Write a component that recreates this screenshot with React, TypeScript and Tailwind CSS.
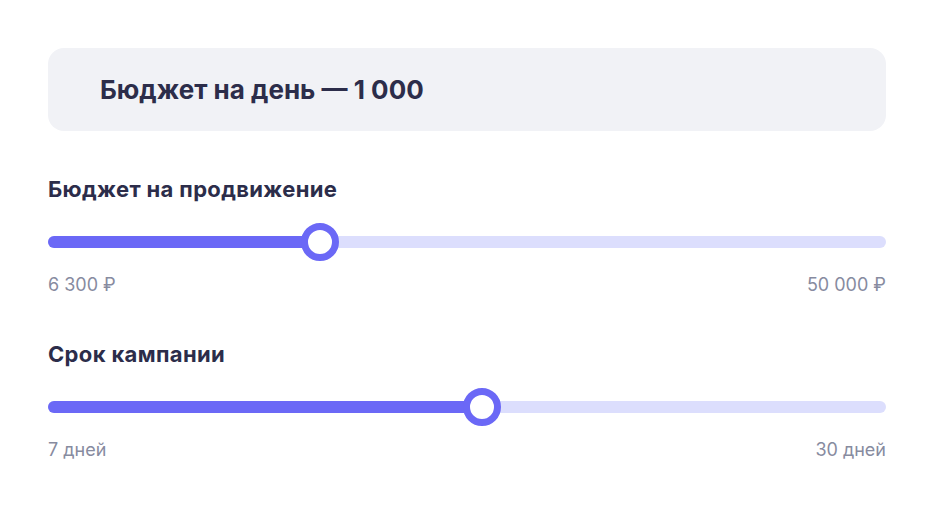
import React from 'react';

type SliderProps = {
  label: string;
  percent: number;
  min: string;
  max: string;
};

const Slider: React.FC<SliderProps> = ({ label, percent, min, max }) => {
  return (
    <div className="flex flex-col">
      <div className="text-[22px] leading-[26px] font-bold tracking-[0.35px] text-[#2c2d4a]">{label}</div>

      {/* Track */}
      <div className="relative mt-[34px] h-[12px] rounded-full bg-[#dcdefd]">
        <div className="h-full rounded-full bg-[#6b68f6]" style={{ width: `${percent}%` }}></div>
        <div
          className="absolute top-1/2 w-[38px] h-[38px] -translate-x-1/2 -translate-y-1/2 rounded-full border-[7px] border-[#6b68f6] bg-white"
          style={{ left: `${percent}%` }}
        ></div>
      </div>

      <div className="mt-[26px] flex justify-between text-[18px] leading-[22px] text-[#878b9f]">
        <span>{min}</span>
        <span>{max}</span>
      </div>
    </div>
  );
};

const App: React.FC = () => {
  return (
    <div
      className="w-[934px] h-[508px] bg-white px-[48px] pt-[48px]"
      style={{ fontFamily: 'Inter, "Noto Sans", sans-serif' }}
    >
      {/* Daily budget */}
      <div className="h-[83px] rounded-[16px] bg-[#f1f2f6] pl-[52px] flex items-center">
        <span className="text-[26px] font-bold text-[#2c2d4a]">Бюджет на день — 1 000</span>
      </div>

      <div className="mt-[45px] flex flex-col gap-[45px]">
        <Slider label="Бюджет на продвижение" percent={32.5} min="6 300 ₽" max="50 000 ₽" />
        <Slider label="Срок кампании" percent={51.8} min="7 дней" max="30 дней" />
      </div>
    </div>
  );
};

export default App;
